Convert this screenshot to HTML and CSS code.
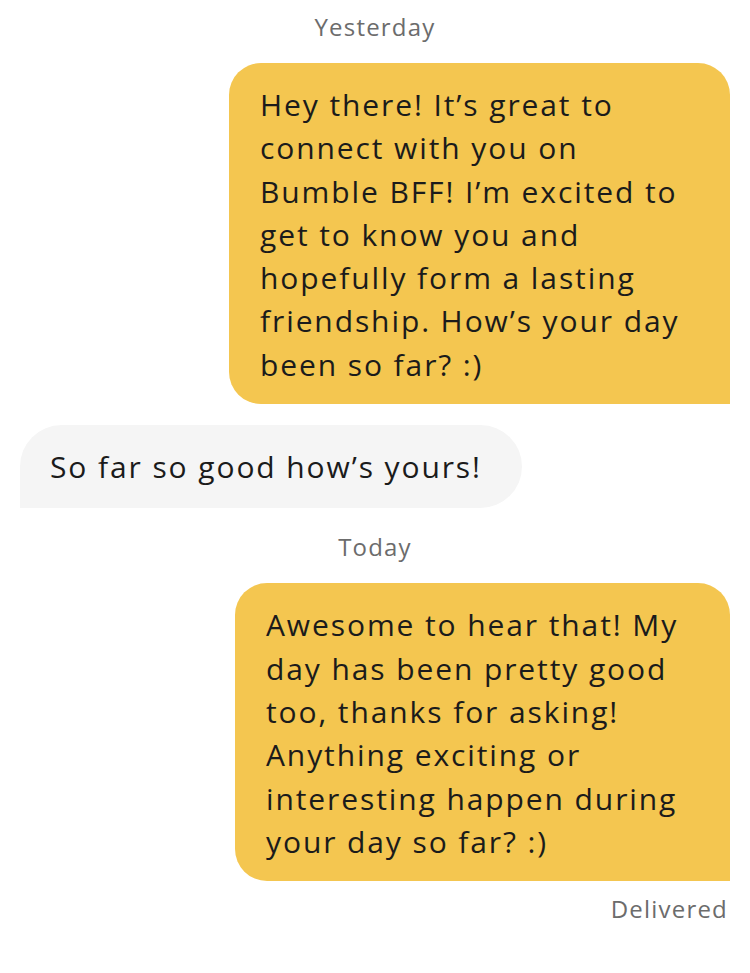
FILE: index.html
```html
<html>

<head>
    <meta charset="UTF-8">
    <title>Chat</title>
    <link rel="stylesheet" href="styles.css">
</head>

<body>
    <div class="chat">
        <p class="stamp">Yesterday</p>
        <div class="row mine">
            <div class="bubble yellow first">Hey there! It’s great to<br>connect with you on<br>Bumble BFF! I’m excited to<br>get to know you and<br>hopefully form a lasting<br>friendship. How’s your day<br>been so far? :)</div>
        </div>
        <div class="row theirs">
            <div class="bubble grey">So far so good how’s yours!</div>
        </div>
        <p class="stamp today">Today</p>
        <div class="row mine">
            <div class="bubble yellow second">Awesome to hear that! My<br>day has been pretty good<br>too, thanks for asking!<br>Anything exciting or<br>interesting happen during<br>your day so far? :)</div>
        </div>
        <p class="status">Delivered</p>
    </div>
</body>

</html>
```

FILE: styles.css
```css
body {
    margin: 0;
    background: #ffffff;
    font-family: "Open Sans", "Noto Sans", sans-serif;
    color: #1b1b1b;
}

div.chat {
    padding: 0 20px;
}

p.stamp {
    margin: 0;
    padding-top: 11px;
    height: 63px;
    box-sizing: border-box;
    text-align: center;
    font-size: 24px;
    letter-spacing: 1.2px;
    line-height: 32px;
    color: #6c6c6c;
}

p.today {
    padding-top: 23px;
    height: 75px;
}

div.row {
    display: flex;
}

div.mine {
    justify-content: flex-end;
}

div.theirs {
    justify-content: flex-start;
    margin-top: 21px;
}

div.bubble {
    font-size: 30px;
    letter-spacing: 1.9px;
    line-height: 43.3px;
    white-space: nowrap;
    box-sizing: border-box;
}

div.yellow {
    background: #f4c650;
    border-radius: 32px 32px 0 32px;
    padding: 20px 20px 18px 31px;
}

div.first {
    width: 501px;
}

div.second {
    width: 495px;
}

div.grey {
    background: #f5f5f5;
    border-radius: 42px 42px 42px 0;
    padding: 20px 20px 20px 30px;
    width: 502px;
}

p.status {
    margin: 0;
    padding-top: 12px;
    text-align: right;
    padding-right: 2px;
    font-size: 24px;
    letter-spacing: 1.2px;
    line-height: 32px;
    color: #6c6c6c;
}
```
